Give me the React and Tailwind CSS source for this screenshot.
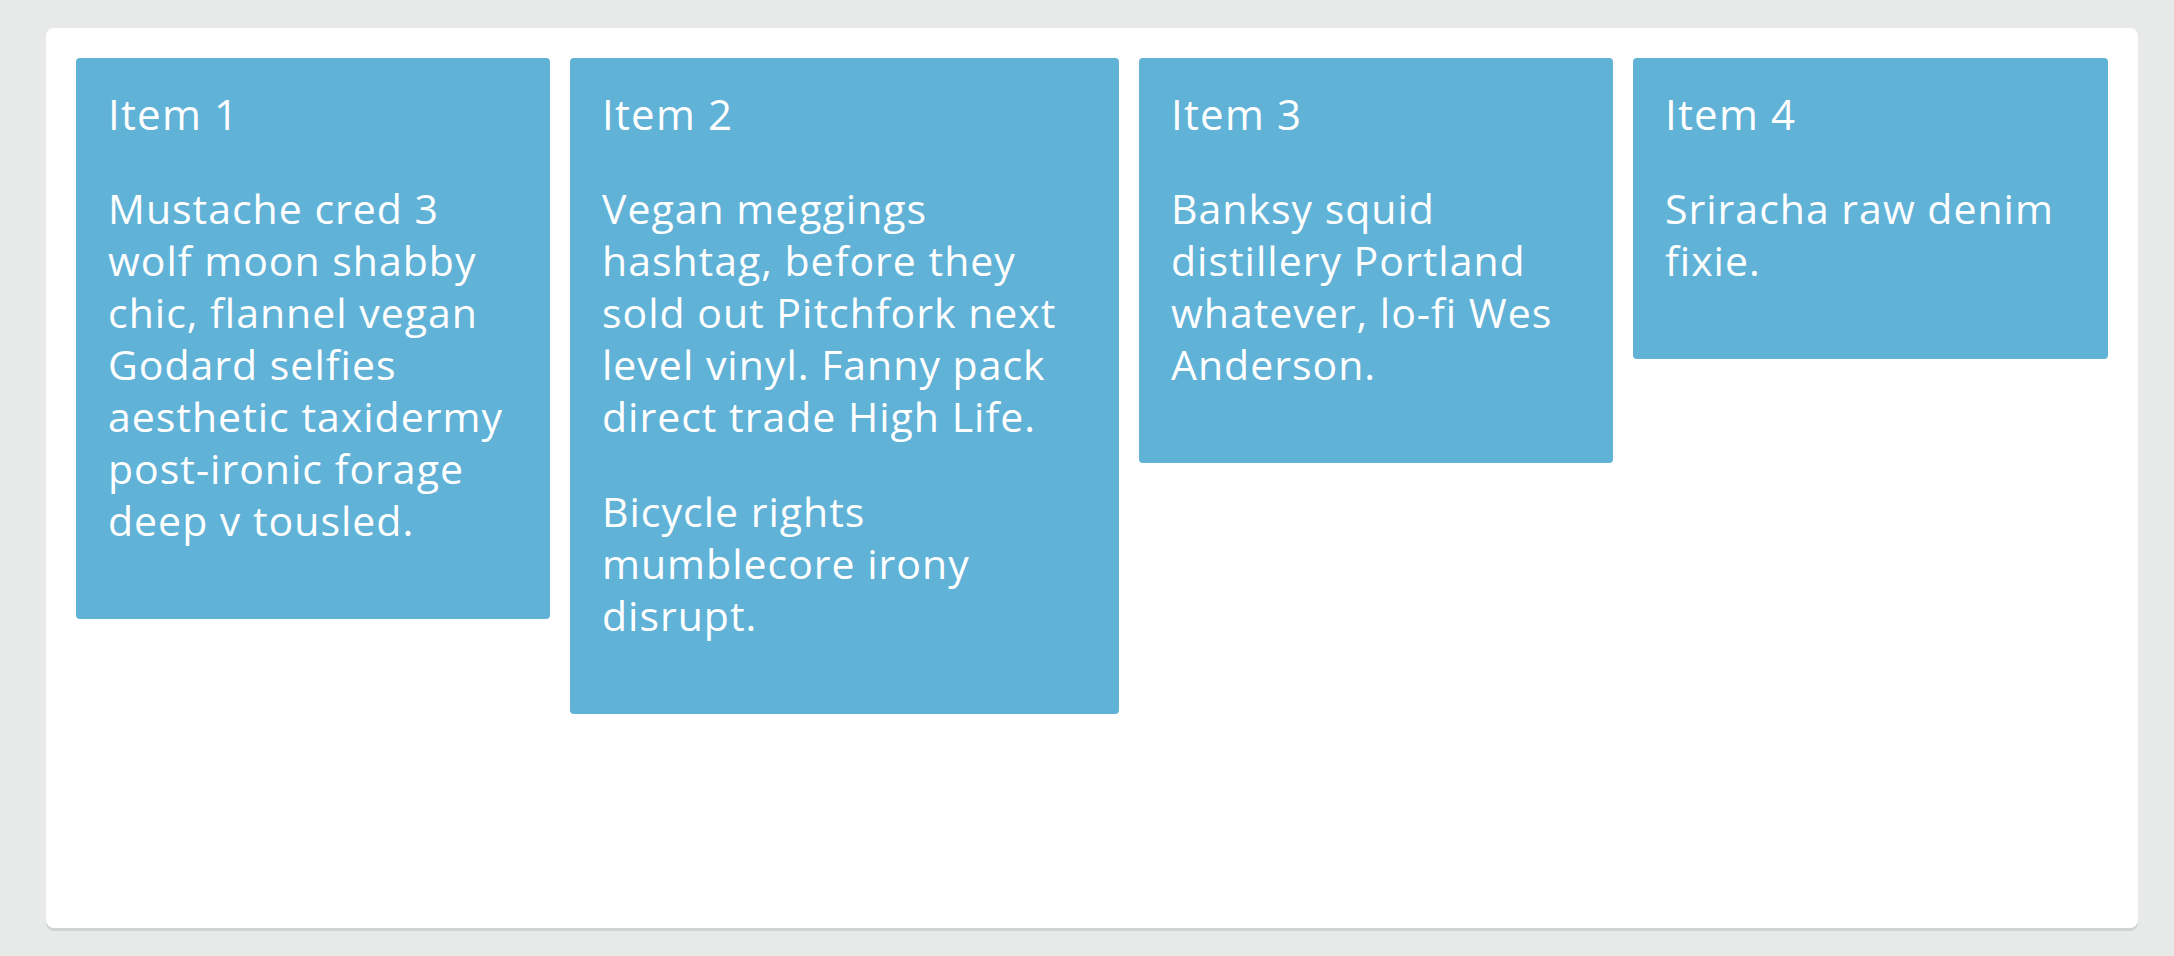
import React from 'react';

const items = [
    {
        title: 'Item 1',
        width: 'w-[474px]',
        paras: [[
            'Mustache cred 3',
            'wolf moon shabby',
            'chic, flannel vegan',
            'Godard selfies',
            'aesthetic taxidermy',
            'post-ironic forage',
            'deep v tousled.',
        ]],
    },
    {
        title: 'Item 2',
        width: 'w-[549px]',
        paras: [
            [
                'Vegan meggings',
                'hashtag, before they',
                'sold out Pitchfork next',
                'level vinyl. Fanny pack',
                'direct trade High Life.',
            ],
            ['Bicycle rights', 'mumblecore irony', 'disrupt.'],
        ],
    },
    {
        title: 'Item 3',
        width: 'w-[474px]',
        paras: [['Banksy squid', 'distillery Portland', 'whatever, lo-fi Wes', 'Anderson.']],
    },
    {
        title: 'Item 4',
        width: 'flex-1',
        paras: [['Sriracha raw denim', 'fixie.']],
    },
];

const Card = ({ item }) => (
    <div className={`${item.width} rounded-[4px] bg-[#60b2d7] px-[32px] pt-[30px] pb-[30px] text-white`}>
        <h2 className="mb-[42px] text-[42px] leading-[52px] font-normal tracking-[1.2px]">{item.title}</h2>
        {item.paras.map((lines, i) => (
            <p key={i} className="mb-[43px] whitespace-nowrap text-[41px] leading-[52px] tracking-[1px]">
                {lines.map((line, j) => (
                    <React.Fragment key={j}>
                        {line}
                        {j < lines.length - 1 && <br />}
                    </React.Fragment>
                ))}
            </p>
        ))}
    </div>
);

const App = () => {
    return (
        <div className="min-h-[956px] bg-[#e8eae9] pt-[28px] pl-[46px] pr-[36px]" style={{ fontFamily: '"Open Sans", "Noto Sans", sans-serif' }}>
            {/* Board */}
            <div className="flex h-[900px] items-start gap-[20px] rounded-[8px] bg-white p-[30px] shadow-[0_3px_0_#d2d4d3]">
                {items.map((item) => (
                    <Card key={item.title} item={item} />
                ))}
            </div>
        </div>
    );
};

export default App;
